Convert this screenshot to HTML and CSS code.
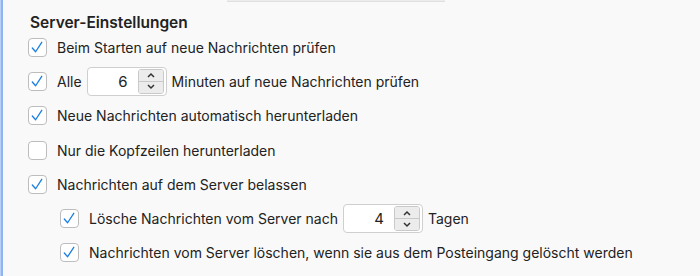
FILE: index.html
```html
<!DOCTYPE html>
<html lang="de">
<head>
  <meta charset="UTF-8" />
  <title>Server-Einstellungen</title>
  <link rel="stylesheet" href="styles.css">
</head>
<body>
  <div class="rand"></div>
  <div class="tab-unten"></div>
  <div class="inhalt">
    <h2>Server-Einstellungen</h2>

    <div class="zeile">
      <span class="box an"><svg viewBox="0 0 18 18"><path d="M3.5 9.5 L7 13.5 L13.5 3.5" /></svg></span>
      <span>Beim Starten auf neue Nachrichten prüfen</span>
    </div>

    <div class="zeile">
      <span class="box an"><svg viewBox="0 0 18 18"><path d="M3.5 9.5 L7 13.5 L13.5 3.5" /></svg></span>
      <span>Alle</span>
      <div class="zahl">
        <span class="wert">6</span>
        <span class="spinner">
          <span class="pfeil"><svg viewBox="0 0 10 6"><path d="M2 5 L5 2 L8 5" /></svg></span>
          <span class="pfeil"><svg viewBox="0 0 10 6"><path d="M2 1 L5 4 L8 1" /></svg></span>
        </span>
      </div>
      <span>Minuten auf neue Nachrichten prüfen</span>
    </div>

    <div class="zeile">
      <span class="box an"><svg viewBox="0 0 18 18"><path d="M3.5 9.5 L7 13.5 L13.5 3.5" /></svg></span>
      <span>Neue Nachrichten automatisch herunterladen</span>
    </div>

    <div class="zeile">
      <span class="box"></span>
      <span>Nur die Kopfzeilen herunterladen</span>
    </div>

    <div class="zeile">
      <span class="box an"><svg viewBox="0 0 18 18"><path d="M3.5 9.5 L7 13.5 L13.5 3.5" /></svg></span>
      <span>Nachrichten auf dem Server belassen</span>
    </div>

    <div class="unter">
      <div class="zeile">
        <span class="box an"><svg viewBox="0 0 18 18"><path d="M3.5 9.5 L7 13.5 L13.5 3.5" /></svg></span>
        <span>Lösche Nachrichten vom Server nach</span>
        <div class="zahl">
          <span class="wert">4</span>
          <span class="spinner">
            <span class="pfeil"><svg viewBox="0 0 10 6"><path d="M2 5 L5 2 L8 5" /></svg></span>
            <span class="pfeil"><svg viewBox="0 0 10 6"><path d="M2 1 L5 4 L8 1" /></svg></span>
          </span>
        </div>
        <span>Tagen</span>
      </div>

      <div class="zeile">
        <span class="box an"><svg viewBox="0 0 18 18"><path d="M3.5 9.5 L7 13.5 L13.5 3.5" /></svg></span>
        <span>Nachrichten vom Server löschen, wenn sie aus dem Posteingang gelöscht werden</span>
      </div>
    </div>
  </div>
</body>
</html>
```

FILE: styles.css
```css
body {
  margin: 0;
  padding: 0;
  background: #f9f9f9;
  font-family: Inter, "Noto Sans", sans-serif;
  font-size: 14px;
  color: #222;
  height: 276px;
  overflow: hidden;
}
.rand {
  position: absolute;
  left: 0;
  top: 0;
  bottom: 0;
  width: 3px;
  background: #8fb4f3;
  border-left: 1px solid #b9d0f8;
  box-sizing: border-box;
}
.tab-unten {
  position: absolute;
  left: 227px;
  top: 0;
  width: 218px;
  height: 2px;
  background: #ececec;
  border-bottom: 1px solid #e0e0e0;
  box-sizing: border-box;
}
.inhalt {
  padding: 14px 0 0 28px;
}
h2 {
  margin: 0 0 -2px 2px;
  font-size: 15.5px;
  font-weight: 600;
  line-height: 18px;
}
.zeile {
  display: flex;
  align-items: center;
  gap: 10px;
  height: 34.3px;
  white-space: nowrap;
}
.box {
  width: 19px;
  height: 19px;
  box-sizing: border-box;
  border: 1px solid #bdbdbd;
  border-radius: 4px;
  background: #fff;
  flex: none;
}
.box svg {
  display: block;
  width: 17px;
  height: 17px;
}
.box path {
  fill: none;
  stroke: #1b7fe3;
  stroke-width: 1.4;
  stroke-linecap: round;
  stroke-linejoin: round;
}
.zahl {
  display: flex;
  width: 80px;
  height: 29px;
  box-sizing: border-box;
  border: 1px solid #cfcfcf;
  border-radius: 4px;
  background: #fff;
  margin: 0 -5px 0 -5px;
}
.wert {
  flex: 1;
  text-align: right;
  padding-right: 10px;
  line-height: 27px;
  font-size: 15px;
}
.spinner {
  display: flex;
  flex-direction: column;
  width: 24px;
  margin: 1px 2px 1px 0;
  border: 1px solid #c9c9c9;
  border-radius: 3px;
  overflow: hidden;
}
.pfeil {
  flex: 1;
  background: #ececec;
  display: flex;
  align-items: center;
  justify-content: center;
}
.pfeil + .pfeil {
  border-top: 1px solid #c9c9c9;
}
.pfeil svg {
  width: 10px;
  height: 6px;
}
.pfeil path {
  fill: none;
  stroke: #333;
  stroke-width: 1.5;
}
.unter {
  padding-left: 32px;
}
```
